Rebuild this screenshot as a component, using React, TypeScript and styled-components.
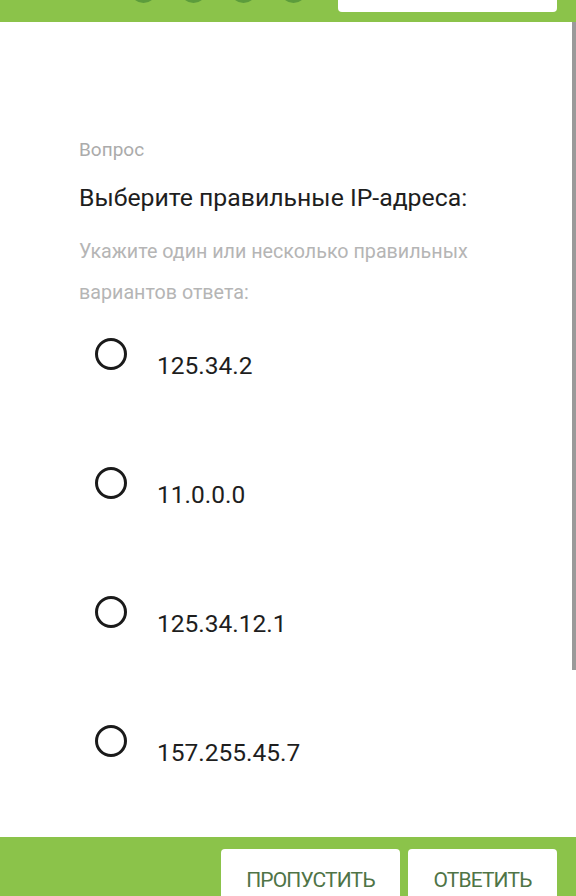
import React from 'react'
import styled, { createGlobalStyle } from 'styled-components'

const GlobalStyle = createGlobalStyle`
  html, body {
    margin: 0;
    padding: 0;
    background: #ffffff;
  }
  body {
    font-family: 'Roboto', 'Liberation Sans', sans-serif;
  }
`

const Page = styled.div`
  width: 576px;
  height: 896px;
  display: flex;
  flex-direction: column;
  overflow: hidden;
`

const TopBar = styled.div`
  height: 22px;
  flex: none;
  background: #8bc34a;
  display: flex;
  align-items: flex-start;
  overflow: hidden;
  padding-left: 130px;
  padding-right: 19px;
`

const Steps = styled.div`
  display: flex;
  gap: 23px;
`

const Step = styled.div`
  width: 27px;
  height: 27px;
  margin-top: -24px;
  border-radius: 50%;
  background: #5c9c3c;
`

const SearchBox = styled.div`
  margin-left: auto;
  width: 219px;
  height: 12px;
  background: #ffffff;
  border-radius: 0 0 4px 4px;
`

const Body = styled.div`
  flex: 1;
  min-height: 0;
  overflow: hidden;
  position: relative;
  background: #ffffff;
  padding: 116px 0 0 79px;
`

const ScrollThumb = styled.div`
  position: absolute;
  top: 0;
  right: 0;
  width: 4px;
  height: 648px;
  background: #9a9a9a;
`

const Label = styled.div`
  font-size: 19px;
  line-height: 24px;
  color: #ababab;
`

const Title = styled.div`
  margin-top: 20px;
  font-size: 24.8px;
  line-height: 32px;
  color: #1e1e1e;
`

const Hint = styled.div`
  margin-top: 17px;
  width: 420px;
  font-size: 19.7px;
  line-height: 41px;
  color: #b5b5b5;
`

const Options = styled.div`
  margin-top: 25px;
  display: flex;
  flex-direction: column;
`

const Option = styled.label`
  height: 129px;
  flex: none;
  display: flex;
  align-items: flex-start;
  padding-left: 16px;
  gap: 30px;
  cursor: pointer;
`

const Radio = styled.span`
  width: 26px;
  height: 26px;
  flex: none;
  border: 3.2px solid #1a1a1a;
  border-radius: 50%;
`

const OptionText = styled.span`
  margin-top: 12px;
  font-size: 24.5px;
  line-height: 32px;
  color: #1e1e1e;
`

const BottomBar = styled.div`
  height: 59px;
  flex: none;
  background: #8bc34a;
  display: flex;
  justify-content: flex-end;
  align-items: flex-start;
  gap: 8px;
  padding: 12px 19px 0 0;
  box-sizing: border-box;
  overflow: hidden;
`

const ActionButton = styled.button<{ $width: number }>`
  width: ${p => p.$width}px;
  height: 56px;
  flex: none;
  border: none;
  border-radius: 4px;
  background: #ffffff;
  color: #4f7446;
  font-family: 'Roboto', 'Liberation Sans', sans-serif;
  font-size: 21px;
  letter-spacing: -0.85px;
  padding: 13px 0 0;
  display: flex;
  justify-content: center;
  align-items: flex-start;
  line-height: 36px;
  text-transform: uppercase;
`

const options = ['125.34.2', '11.0.0.0', '125.34.12.1', '157.255.45.7']

const App = () => {
  return (
    <Page>
      <GlobalStyle />
      <TopBar>
        <Steps>
          <Step />
          <Step />
          <Step />
          <Step />
        </Steps>
        <SearchBox />
      </TopBar>
      <Body>
        <ScrollThumb />
        <Label>Вопрос</Label>
        <Title>Выберите правильные IP-адреса:</Title>
        <Hint>Укажите один или несколько правильных вариантов ответа:</Hint>
        <Options>
          {options.map(o => (
            <Option key={o}>
              <Radio />
              <OptionText>{o}</OptionText>
            </Option>
          ))}
        </Options>
      </Body>
      <BottomBar>
        <ActionButton $width={179}>Пропустить</ActionButton>
        <ActionButton $width={149}>Ответить</ActionButton>
      </BottomBar>
    </Page>
  )
}

export default App
